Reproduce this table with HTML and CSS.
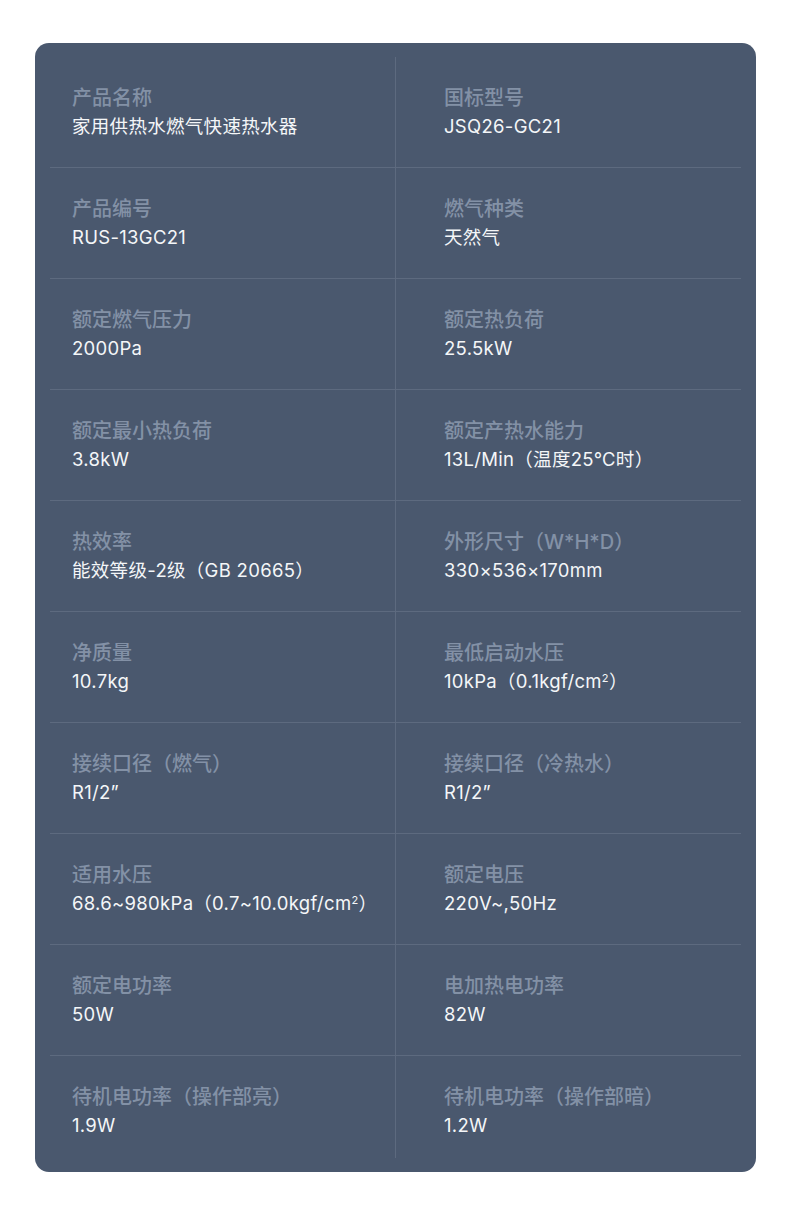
FILE: index.html
```html
<!DOCTYPE html>
<html lang="zh-CN">
<head>
  <meta charset="UTF-8">
  <title>产品参数</title>
  <link rel="stylesheet" href="styles.css">
</head>
<body>
<div class="card">
  <div class="specs">
    <div class="row">
      <div class="cell"><div class="label">产品名称</div><div class="value">家用供热水燃气快速热水器</div></div>
      <div class="cell"><div class="label">国标型号</div><div class="value">JSQ26-GC21</div></div>
    </div>
    <div class="row">
      <div class="cell"><div class="label">产品编号</div><div class="value">RUS-13GC21</div></div>
      <div class="cell"><div class="label">燃气种类</div><div class="value">天然气</div></div>
    </div>
    <div class="row">
      <div class="cell"><div class="label">额定燃气压力</div><div class="value">2000Pa</div></div>
      <div class="cell"><div class="label">额定热负荷</div><div class="value">25.5kW</div></div>
    </div>
    <div class="row">
      <div class="cell"><div class="label">额定最小热负荷</div><div class="value">3.8kW</div></div>
      <div class="cell"><div class="label">额定产热水能力</div><div class="value">13L/Min（温度25℃时）</div></div>
    </div>
    <div class="row">
      <div class="cell"><div class="label">热效率</div><div class="value">能效等级-2级（GB 20665）</div></div>
      <div class="cell"><div class="label">外形尺寸（W*H*D）</div><div class="value">330×536×170mm</div></div>
    </div>
    <div class="row">
      <div class="cell"><div class="label">净质量</div><div class="value">10.7kg</div></div>
      <div class="cell"><div class="label">最低启动水压</div><div class="value">10kPa（0.1kgf/cm<sup>2</sup>）</div></div>
    </div>
    <div class="row">
      <div class="cell"><div class="label">接续口径（燃气）</div><div class="value">R1/2”</div></div>
      <div class="cell"><div class="label">接续口径（冷热水）</div><div class="value">R1/2”</div></div>
    </div>
    <div class="row">
      <div class="cell"><div class="label">适用水压</div><div class="value">68.6~980kPa（0.7~10.0kgf/cm<sup>2</sup>）</div></div>
      <div class="cell"><div class="label">额定电压</div><div class="value">220V~,50Hz</div></div>
    </div>
    <div class="row">
      <div class="cell"><div class="label">额定电功率</div><div class="value">50W</div></div>
      <div class="cell"><div class="label">电加热电功率</div><div class="value">82W</div></div>
    </div>
    <div class="row">
      <div class="cell"><div class="label">待机电功率（操作部亮）</div><div class="value">1.9W</div></div>
      <div class="cell"><div class="label">待机电功率（操作部暗）</div><div class="value">1.2W</div></div>
    </div>
  </div>
</div>
</body>
</html>
```

FILE: styles.css
```css
body {
  margin: 0;
  background: #fff;
  font-family: Inter, "Noto Sans CJK SC", sans-serif;
}

.card {
  margin: 43px 34px 0 35px;
  width: 691px;
  padding: 14px 15px;
  background: #4a586e;
  border-radius: 14px;
}

.row {
  display: grid;
  grid-template-columns: 345px 346px;
  height: 110px;
  border-bottom: 1px solid #5d6a7f;
}

.row:last-child {
  height: 102px;
  border-bottom: none;
}

.cell {
  padding: 27px 0 0 22px;
}

.cell + .cell {
  padding-left: 48px;
  border-left: 1px solid #5d6a7f;
}

.label {
  font-size: 20px;
  line-height: 28px;
  font-weight: 500;
  color: #8391a6;
}

.value {
  font-size: 18.5px;
  line-height: 28px;
  letter-spacing: 0.3px;
  color: #f4f6f8;
}

.value sup {
  font-size: 11px;
  line-height: 0;
  vertical-align: 6px;
}
```
